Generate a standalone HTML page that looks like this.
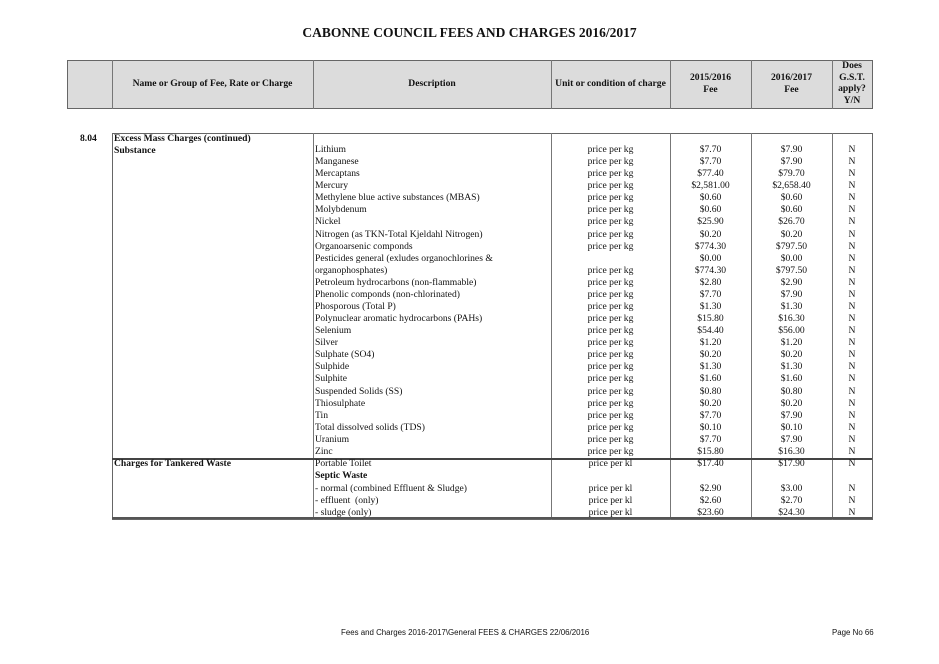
<!DOCTYPE html>
<html><head><meta charset="utf-8"><style>
body{margin:0;width:939px;height:664px;background:#fff;position:relative;overflow:hidden;font-family:"Liberation Serif",serif;color:#111}
.a{position:absolute;white-space:nowrap;font-size:9.6px;line-height:12px}
.b{font-weight:bold}
.c{text-align:center}
.l{position:absolute;background:#777}
</style></head><body>
<div class="a b c" style="left:0;width:939px;top:24px;font-size:13.5px;line-height:18px">CABONNE COUNCIL FEES AND CHARGES 2016/2017</div>
<div style="position:absolute;left:67px;top:60px;width:804px;height:47px;background:#dcdcdc;border:1px solid #666"></div>
<div class="l" style="left:112px;top:60px;width:1px;height:49px"></div>
<div class="l" style="left:313px;top:60px;width:1px;height:49px"></div>
<div class="l" style="left:551px;top:60px;width:1px;height:49px"></div>
<div class="l" style="left:670px;top:60px;width:1px;height:49px"></div>
<div class="l" style="left:751px;top:60px;width:1px;height:49px"></div>
<div class="l" style="left:832px;top:60px;width:1px;height:49px"></div>
<div class="a b c" style="left:112px;width:201px;top:78px">Name or Group of Fee, Rate or Charge</div>
<div class="a b c" style="left:313px;width:238px;top:78px">Description</div>
<div class="a b c" style="left:551px;width:119px;top:78px">Unit or condition of charge</div>
<div class="a b c" style="left:670px;width:81px;top:72px;line-height:12px">2015/2016<br>Fee</div>
<div class="a b c" style="left:751px;width:81px;top:72px;line-height:12px">2016/2017<br>Fee</div>
<div class="a b c" style="left:832px;width:40px;top:60px;line-height:11.7px">Does<br>G.S.T.<br>apply?<br>Y/N</div>

<div style="position:absolute;left:112px;top:133px;width:759px;height:385px;border:1px solid #666"></div>
<div class="l" style="left:313px;top:133px;width:1px;height:387px"></div>
<div class="l" style="left:551px;top:133px;width:1px;height:387px"></div>
<div class="l" style="left:670px;top:133px;width:1px;height:387px"></div>
<div class="l" style="left:751px;top:133px;width:1px;height:387px"></div>
<div class="l" style="left:832px;top:133px;width:1px;height:387px"></div>
<div class="l" style="left:112px;top:458px;width:760px;height:2px;background:#444"></div>
<div class="l" style="left:112px;top:517px;width:760px;height:2px;background:#555"></div>

<div class="a b" style="left:80px;top:133px">8.04</div>
<div class="a b" style="left:114px;top:133px">Excess Mass Charges (continued)</div>
<div class="a b" style="left:114px;top:145px">Substance</div>
<div class="a b" style="left:114px;top:458px">Charges for Tankered Waste</div>

<div id="rows"></div>
<div class="a" style="left:315px;top:144px;line-height:12.08px">Lithium<br>Manganese<br>Mercaptans<br>Mercury<br>Methylene blue active substances (MBAS)<br>Molybdenum<br>Nickel<br>Nitrogen (as TKN-Total Kjeldahl Nitrogen)<br>Organoarsenic componds<br>Pesticides general (exludes organochlorines &amp;<br>organophosphates)<br>Petroleum hydrocarbons (non-flammable)<br>Phenolic componds (non-chlorinated)<br>Phosporous (Total P)<br>Polynuclear aromatic hydrocarbons (PAHs)<br>Selenium<br>Silver<br>Sulphate (SO4)<br>Sulphide<br>Sulphite<br>Suspended Solids (SS)<br>Thiosulphate<br>Tin<br>Total dissolved solids (TDS)<br>Uranium<br>Zinc</div>
<div class="a c" style="left:551px;width:119px;top:144px;line-height:12.08px">price per kg<br>price per kg<br>price per kg<br>price per kg<br>price per kg<br>price per kg<br>price per kg<br>price per kg<br>price per kg<br>&nbsp;<br>price per kg<br>price per kg<br>price per kg<br>price per kg<br>price per kg<br>price per kg<br>price per kg<br>price per kg<br>price per kg<br>price per kg<br>price per kg<br>price per kg<br>price per kg<br>price per kg<br>price per kg<br>price per kg</div>
<div class="a c" style="left:670px;width:81px;top:144px;line-height:12.08px">$7.70<br>$7.70<br>$77.40<br>$2,581.00<br>$0.60<br>$0.60<br>$25.90<br>$0.20<br>$774.30<br>$0.00<br>$774.30<br>$2.80<br>$7.70<br>$1.30<br>$15.80<br>$54.40<br>$1.20<br>$0.20<br>$1.30<br>$1.60<br>$0.80<br>$0.20<br>$7.70<br>$0.10<br>$7.70<br>$15.80</div>
<div class="a c" style="left:751px;width:81px;top:144px;line-height:12.08px">$7.90<br>$7.90<br>$79.70<br>$2,658.40<br>$0.60<br>$0.60<br>$26.70<br>$0.20<br>$797.50<br>$0.00<br>$797.50<br>$2.90<br>$7.90<br>$1.30<br>$16.30<br>$56.00<br>$1.20<br>$0.20<br>$1.30<br>$1.60<br>$0.80<br>$0.20<br>$7.90<br>$0.10<br>$7.90<br>$16.30</div>
<div class="a c" style="left:832px;width:40px;top:144px;line-height:12.08px">N<br>N<br>N<br>N<br>N<br>N<br>N<br>N<br>N<br>N<br>N<br>N<br>N<br>N<br>N<br>N<br>N<br>N<br>N<br>N<br>N<br>N<br>N<br>N<br>N<br>N</div>

<div class="a" style="left:315px;top:458px">Portable Toilet</div>
<div class="a b" style="left:315px;top:470px">Septic Waste</div>
<div class="a" style="left:315px;top:483px">- normal (combined Effluent &amp; Sludge)</div>
<div class="a" style="left:315px;top:495px">- effluent &nbsp;(only)</div>
<div class="a" style="left:315px;top:507px">- sludge (only)</div>
<div class="a c" style="left:551px;width:119px;top:458px">price per kl</div>
<div class="a c" style="left:551px;width:119px;top:483px;line-height:12.2px">price per kl<br>price per kl<br>price per kl</div>
<div class="a c" style="left:670px;width:81px;top:458px">$17.40</div>
<div class="a c" style="left:670px;width:81px;top:483px;line-height:12.2px">$2.90<br>$2.60<br>$23.60</div>
<div class="a c" style="left:751px;width:81px;top:458px">$17.90</div>
<div class="a c" style="left:751px;width:81px;top:483px;line-height:12.2px">$3.00<br>$2.70<br>$24.30</div>
<div class="a c" style="left:832px;width:40px;top:458px">N</div>
<div class="a c" style="left:832px;width:40px;top:483px;line-height:12.2px">N<br>N<br>N</div>

<div class="a" style="left:341px;top:628px;font-family:'Liberation Sans',sans-serif;font-size:7.9px;line-height:10px">Fees and Charges 2016-2017\General FEES &amp; CHARGES 22/06/2016</div>
<div class="a" style="left:832px;top:628px;font-family:'Liberation Sans',sans-serif;font-size:7.9px;line-height:10px">Page No 66</div>
</body></html>
